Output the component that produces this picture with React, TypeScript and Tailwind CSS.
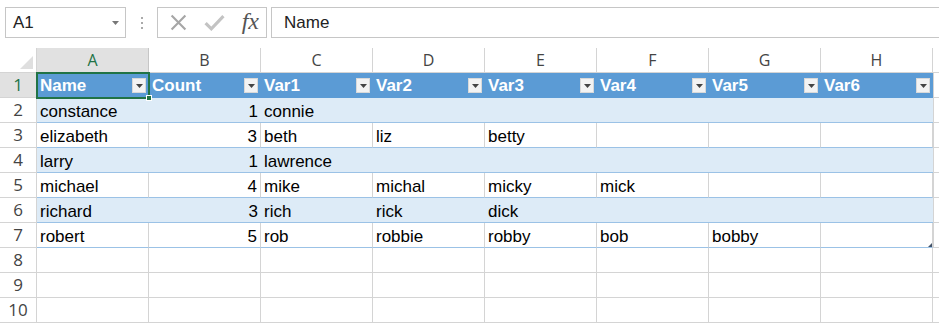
import React from "react";

const cols = ["A", "B", "C", "D", "E", "F", "G", "H"];
const headers = ["Name", "Count", "Var1", "Var2", "Var3", "Var4", "Var5", "Var6"];
const rows: string[][] = [
  ["constance", "1", "connie", "", "", "", "", ""],
  ["elizabeth", "3", "beth", "liz", "betty", "", "", ""],
  ["larry", "1", "lawrence", "", "", "", "", ""],
  ["michael", "4", "mike", "michal", "micky", "mick", "", ""],
  ["richard", "3", "rich", "rick", "dick", "", "", ""],
  ["robert", "5", "rob", "robbie", "robby", "bob", "bobby", ""],
];

function FilterButton() {
  return (
    <div className="absolute right-[3px] top-[5px] w-[14px] h-[15px] bg-[#f3f3f3] border border-[#d9d9d9] flex items-center justify-center">
      <svg width="7" height="4" viewBox="0 0 7 4">
        <path d="M0 0h7L3.5 4z" fill="#444" />
      </svg>
    </div>
  );
}

function RowHead({ n, active }: { n: number; active?: boolean }) {
  return (
    <div
      className={
        "w-[37px] h-[25px] shrink-0 flex items-center justify-center border-r border-b border-[#d4d4d4] text-[17px] " +
        (active ? "bg-[#e1e1e1] text-[#217346]" : "bg-white text-[#444]")
      }
      style={{ fontFamily: "'Open Sans', sans-serif" }}
    >
      {n}
    </div>
  );
}

export default function App() {
  return (
    <div className="w-[939px] h-[324px] bg-white overflow-hidden select-none" style={{ fontFamily: "'Liberation Sans', Arial, sans-serif" }}>
      {/* formula bar */}
      <div className="h-[48px] flex items-start pt-[7px]">
        <div className="ml-[5px] w-[121px] h-[31px] border border-[#c6c6c6] flex items-center pl-[7px] pr-[6px] text-[17px] text-[#222]">
          <span className="flex-1">A1</span>
          <svg width="7" height="4" viewBox="0 0 7 4">
            <path d="M0 0h7L3.5 4z" fill="#777" />
          </svg>
        </div>
        <div className="w-[31px] h-[31px] flex flex-col items-center justify-center gap-[3px]">
          <div className="w-[2px] h-[2px] bg-[#aaa]" />
          <div className="w-[2px] h-[2px] bg-[#aaa]" />
          <div className="w-[2px] h-[2px] bg-[#aaa]" />
        </div>
        <div className="w-[110px] h-[31px] border border-[#c6c6c6] flex items-center justify-between pl-[12px] pr-[7px]">
          <svg width="17" height="17" viewBox="0 0 16 16">
            <path d="M1.5 1.5l13 13M14.5 1.5l-13 13" stroke="#a6a6a6" strokeWidth="2" />
          </svg>
          <svg width="21" height="17" viewBox="0 0 20 16">
            <path d="M1.5 8.5l5.5 5.5L18.5 2" stroke="#c3c3c3" strokeWidth="3" fill="none" />
          </svg>
          <span className="text-[24px] italic text-[#555] leading-none -mt-[3px]" style={{ fontFamily: "'Liberation Serif', serif" }}>
            fx
          </span>
        </div>
        <div className="ml-[4px] flex-1 h-[31px] border-y border-l border-[#c6c6c6] flex items-center pl-[12px] text-[17px] text-[#222]">
          Name
        </div>
      </div>

      {/* column headers */}
      <div className="flex h-[25px]">
        <div className="w-[37px] shrink-0 border-r border-b border-[#d4d4d4] bg-white relative overflow-hidden">
          <svg className="absolute right-[3px] bottom-[3px]" width="13" height="13" viewBox="0 0 13 13">
            <path d="M13 0v13H0z" fill="#dfdfdf" />
          </svg>
        </div>
        {cols.map((c, i) => (
          <div
            key={c}
            className={
              "w-[112px] shrink-0 flex items-center justify-center border-r border-b text-[16px] " +
              (i === 0 ? "bg-[#e1e1e1] text-[#217346] border-[#c6c6c6]" : "bg-white text-[#444] border-[#d4d4d4]")
            }
            style={{ fontFamily: "'Open Sans', sans-serif" }}
          >
            {c}
          </div>
        ))}
        <div className="flex-1 border-b border-[#d4d4d4]" />
      </div>

      {/* row 1: table header */}
      <div className="flex h-[25px]">
        <RowHead n={1} active />
        {headers.map((h, i) => (
          <div
            key={h}
            className={
              "w-[112px] shrink-0 h-[25px] bg-[#5b9bd5] text-white font-bold text-[17px] pl-[3px] pt-[1px] flex items-center relative " +
              (i === 0 ? "outline-2 outline-[#217346] -outline-offset-1 z-10" : "")
            }
          >
            {h}
            <FilterButton />
            {i === 0 && <div className="absolute -right-[3px] -bottom-[3px] w-[6px] h-[6px] bg-[#217346] border border-white z-20" />}
          </div>
        ))}
        <div className="flex-1 border-b border-l border-[#d4d4d4]" />
      </div>

      {/* data rows */}
      {rows.map((r, ri) => {
        const banded = ri % 2 === 0;
        const last = ri === rows.length - 1;
        return (
          <div key={ri} className="flex h-[25px]">
            <RowHead n={ri + 2} />
            {r.map((v, ci) => (
              <div
                key={ci}
                className={
                  "w-[112px] shrink-0 h-[25px] text-[17px] text-black flex items-center px-[3px] pt-[3px] border-b border-[#9bc2e6] relative " +
                  (banded ? "bg-[#ddebf7] " : "bg-white border-r border-r-[#d4d4d4] ") +
                  (ci === 1 ? "justify-end" : "")
                }
              >
                {v}
                {last && ci === 7 && (
                  <svg className="absolute right-[0px] bottom-[0px]" width="4" height="4" viewBox="0 0 4 4">
                    <path d="M4 0v4H0z" fill="#44546a" />
                  </svg>
                )}
              </div>
            ))}
            <div className="flex-1 border-b border-l border-[#d4d4d4]" />
          </div>
        );
      })}

      {/* empty rows */}
      {[8, 9, 10].map((n) => (
        <div key={n} className="flex h-[25px]">
          <RowHead n={n} />
          {cols.map((c) => (
            <div key={c} className="w-[112px] shrink-0 h-[25px] border-r border-b border-[#d4d4d4]" />
          ))}
          <div className="flex-1 border-b border-[#d4d4d4]" />
        </div>
      ))}
    </div>
  );
}
